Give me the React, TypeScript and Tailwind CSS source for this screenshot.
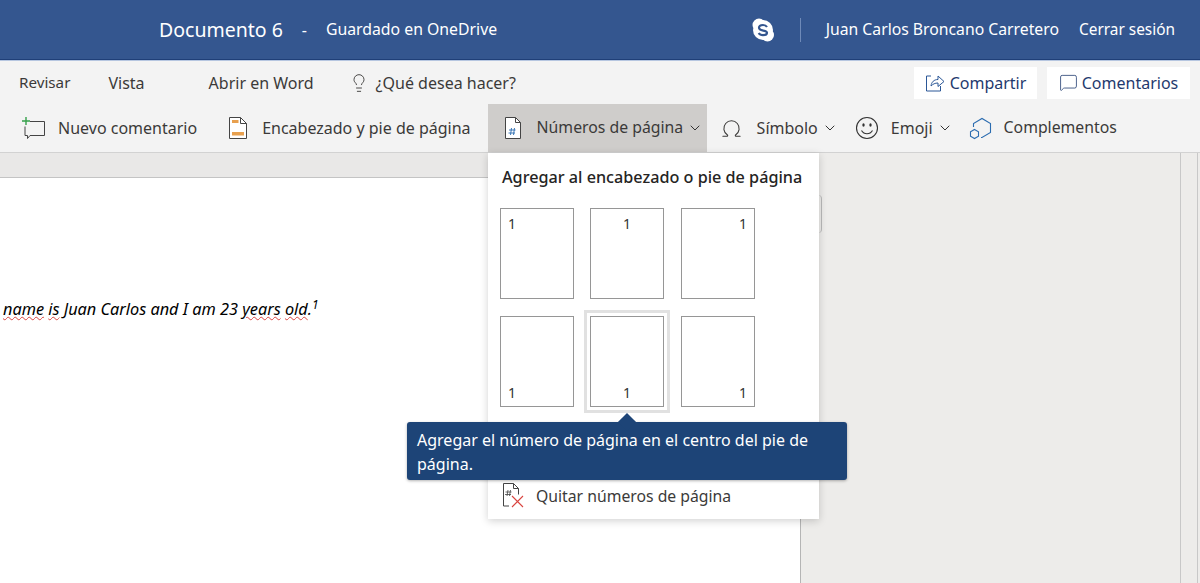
import React from 'react';
import { ChevronDown, Lightbulb, MessageSquare, Omega } from 'lucide-react';

const font = "font-['Noto_Sans','Open_Sans',sans-serif]";

function NewCommentIcon() {
  return (
    <svg width="26" height="24" viewBox="0 0 26 24" fill="none" className="shrink-0">
      <path d="M10 5.500h14.500v14H10l-2.500 3v-3H5v-9" stroke="#444" strokeWidth="1" />
      <path d="M6 1v8M2 5h8" stroke="#35a04a" strokeWidth="1.400" />
    </svg>
  );
}

function HeaderFooterIcon() {
  return (
    <svg width="20" height="24" viewBox="0 0 20 24" fill="none" className="shrink-0">
      <path d="M1.500 1.500h11l6 6v15h-17z" fill="#fff" stroke="#444" />
      <path d="M12.500 1.500v6h6" stroke="#444" />
      <rect x="4" y="4" width="6.500" height="3" fill="#e8a04e" />
      <rect x="4" y="16" width="12" height="3.500" fill="#e8a04e" />
    </svg>
  );
}

function PageNumberIcon() {
  return (
    <svg width="18" height="24" viewBox="0 0 18 24" fill="none" className="shrink-0">
      <path d="M1.500 1.500h10l5 5v16h-15z" fill="#fff" stroke="#444" />
      <path d="M11.500 1.500v5h5" stroke="#444" />
      <path d="M7.500 12l-1 7M10.500 12l-1 7M5 14h6.500M4.500 17h6.500" stroke="#2b6cb0" strokeWidth="0.900" />
    </svg>
  );
}

function EmojiIcon() {
  return (
    <svg width="24" height="24" viewBox="0 0 24 24" fill="none" className="shrink-0">
      <circle cx="12" cy="12" r="10.500" stroke="#333" strokeWidth="1.100" />
      <ellipse cx="8.500" cy="9" rx="1.200" ry="1.800" fill="#333" />
      <ellipse cx="15.500" cy="9" rx="1.200" ry="1.800" fill="#333" />
      <path d="M6.500 14.500c1.300 2.200 3.200 3.300 5.500 3.300s4.200-1.100 5.500-3.300" stroke="#333" strokeWidth="1.100" />
    </svg>
  );
}

function AddinsIcon() {
  return (
    <svg width="24" height="24" viewBox="0 0 24 24" fill="none" className="shrink-0">
      <path d="M4.500 11V7.500L13 2.500l8.500 5v9l-8.500 5h-1" stroke="#2b6cb0" strokeWidth="1.100" />
      <path d="M5.500 13.500l4 2.300v4.500l-4 2.300-4-2.300v-4.500z" stroke="#2b6cb0" strokeWidth="1.100" />
    </svg>
  );
}

function RemoveNumberIcon() {
  return (
    <svg width="24" height="26" viewBox="0 0 24 26" fill="none" className="shrink-0">
      <path d="M7 24H1.500V1.500h10l5 5v6" stroke="#444" />
      <path d="M11.500 1.500v5h5" stroke="#444" />
      <path d="M6 8l-1 6M8.500 8l-1 6M3.500 10h6M3 12.500h6" stroke="#444" strokeWidth="0.800" />
      <path d="M10 14l11 11M21 14L10 25" stroke="#d9443f" strokeWidth="1.100" />
    </svg>
  );
}

function SkypeIcon() {
  return (
    <svg width="24" height="24" viewBox="0 0 24 24" className="shrink-0">
      <circle cx="8" cy="7" r="6.500" fill="#fff" />
      <circle cx="16.500" cy="17" r="6.500" fill="#fff" />
      <circle cx="12" cy="12" r="10" fill="#fff" />
      <path d="M16 9c-.8-1.300-2.200-2-4-2-2.300 0-4 1.100-4 2.800 0 3.700 8 2 8 5 0 1.400-1.600 2.400-4 2.400-2 0-3.500-.8-4.300-2.200" fill="none" stroke="#34568f" strokeWidth="2.200" />
    </svg>
  );
}

function PageThumb({ h, v, selected }: { h: string; v: string; selected?: boolean }) {
  return (
    <div className={`w-[74px] h-[91px] border border-[#969696] bg-white flex px-[7px] pt-[6px] pb-[4px] text-[14px] leading-[18px] text-[#333] ${h} ${v} ${selected ? 'outline-[3px] outline-offset-[3px] outline-[#e1e1e1]' : ''}`}>
      1
    </div>
  );
}

function RibbonItem({ icon, label, caret, gap, className }: { icon: React.ReactNode; label: string; caret?: boolean; gap: string; className?: string }) {
  return (
    <div className={`flex items-center h-full whitespace-nowrap ${className ?? ''}`}>
      {icon}
      <span className={gap}>{label}</span>
      {caret && <ChevronDown size={16} strokeWidth={1.5} className="ml-[4px] text-[#333]" />}
    </div>
  );
}

const misspelled = 'underline decoration-wavy decoration-[#d9443f] decoration-1';

export default function App() {
  return (
    <div className={`w-[1200px] h-[583px] overflow-hidden relative bg-white text-[#3b3a39] ${font}`}>
      <header className="h-[60px] bg-[#34568f] border-b border-[#1f3f78] flex items-center text-white">
        <span className="ml-[159px] text-[19.500px]">Documento 6</span>
        <span className="ml-[19px] text-[16px]">-</span>
        <span className="ml-[19px] text-[15.800px]">Guardado en OneDrive</span>
        <div className="ml-auto flex items-center">
          <SkypeIcon />
          <div className="w-px h-[24px] bg-[#6f8ab8] ml-[25px]" />
          <span className="ml-[25px] text-[15.750px]">Juan Carlos Broncano Carretero</span>
          <span className="ml-[20px] mr-[25px] text-[15.400px]">Cerrar sesión</span>
        </div>
      </header>

      <div className="h-[44px] bg-[#f3f3f3] flex items-center text-[16px] border-t border-[#b6c6e0]">
        <span className="ml-[19px] text-[15.200px]">Revisar</span>
        <span className="ml-[38px]">Vista</span>
        <span className="ml-[64px]">Abrir en Word</span>
        <Lightbulb size={20} strokeWidth={1.1} className="ml-[35px]" />
        <span className="ml-[7px]">¿Qué desea hacer?</span>
        <div className="ml-auto flex items-center gap-[10px] mr-[10px] text-[16px] text-[#1f3a6e]">
          <div className="h-[32px] w-[123px] bg-white flex items-center justify-center gap-[5px]">
            <svg width="20" height="20" viewBox="0 0 20 20" fill="none" stroke="#2b5797" strokeWidth="1">
              <path d="M6 3H1.500v15h14v-5M6 13c.5-4 3-6.500 7-6.500V3l6 5.500-6 5V10c-3 0-5 1-7 3z" />
            </svg>
            Compartir
          </div>
          <div className="h-[32px] w-[143px] bg-white flex items-center justify-center gap-[4px]">
            <MessageSquare size={19} strokeWidth={1} />
            Comentarios
          </div>
        </div>
      </div>

      <div className="h-[49px] bg-[#f3f3f3] flex items-start text-[16px] border-b border-[#d2d2d2]">
        <RibbonItem className="ml-[20px]" gap="ml-[12px]" icon={<NewCommentIcon />} label="Nuevo comentario" />
        <RibbonItem className="ml-[31px]" gap="ml-[14px]" icon={<HeaderFooterIcon />} label="Encabezado y pie de página" />
        <RibbonItem className="ml-[17px] w-[219px] pl-[16px] bg-[#cfcdcb] text-[15.800px]" gap="ml-[15px]" icon={<PageNumberIcon />} label="Números de página" caret />
        <RibbonItem className="ml-[13px]" gap="ml-[14px]" icon={<Omega size={23} strokeWidth={1.1} />} label="Símbolo" caret />
        <RibbonItem className="ml-[17px]" gap="ml-[12px]" icon={<EmojiIcon />} label="Emoji" caret />
        <RibbonItem className="ml-[16px] text-[15.800px]" gap="ml-[11px]" icon={<AddinsIcon />} label="Complementos" />
      </div>

      <main className="flex h-[430px]">
        <div className="w-[801px] shrink-0 flex flex-col border-r border-[#b5b5b5]">
          <div className="h-[25px] bg-[#e9e8e7] border-b border-[#c4c4c4] shrink-0" />
          <div className="flex-1 bg-white pt-[119px] pl-[3px] text-[16.300px] italic text-black whitespace-nowrap">
            <span className={misspelled}>name</span>{' '}
            <span className={misspelled}>is</span> Juan Carlos and I am 23{' '}
            <span className={misspelled}>years</span>{' '}
            <span className={misspelled}>old</span>.<sup className="text-[12px]">1</sup>
          </div>
        </div>
        <div className="flex-1 bg-[#edecea] flex justify-end">
          <div className="w-[18px] mr-[2px] border-x border-[#c8c8c8]" />
        </div>
      </main>

      {/* edge of the page control that sticks out from behind the dropdown */}
      <div className="absolute left-[808px] top-[195px] w-[14px] h-[38px] border-r border-[#b9b9b9] rounded-r-[4px]" />

      {/* dropdown */}
      <div className="absolute left-[488px] top-[153px] w-[331px] h-[366px] bg-white shadow-[0_2px_8px_rgba(0,0,0,0.18)] pl-[12px]">
        <div className="pt-[12px] pl-[2px] text-[16.200px] font-medium text-[#252423]">Agregar al encabezado o pie de página</div>
        <div className="mt-[19px] grid grid-cols-[90px_91px_74px] gap-y-[17px]">
          <PageThumb h="justify-start" v="items-start" />
          <PageThumb h="justify-center" v="items-start" />
          <PageThumb h="justify-end" v="items-start" />
          <PageThumb h="justify-start" v="items-end" />
          <PageThumb h="justify-center" v="items-end" selected />
          <PageThumb h="justify-end" v="items-end" />
        </div>
        <div className="absolute left-[14px] top-[329px] flex items-center gap-[10px] text-[15.750px]">
          <RemoveNumberIcon />
          <span className="pt-[3px]">Quitar números de página</span>
        </div>
      </div>

      {/* tooltip */}
      <div className="absolute left-[407px] top-[422px] w-[440px] h-[58px] bg-[#1d4477] rounded-[3px] shadow-[0_1px_3px_rgba(0,0,0,0.3)] px-[10px] pt-[6px] text-[16px] leading-[24px] text-white">
        <div className="absolute left-[212px] -top-[8px] w-[16px] h-[16px] rotate-45 bg-[#1d4477] scale-[0.8]" />
        <div className="relative">Agregar el número de página en el centro del pie de página.</div>
      </div>
    </div>
  );
}
